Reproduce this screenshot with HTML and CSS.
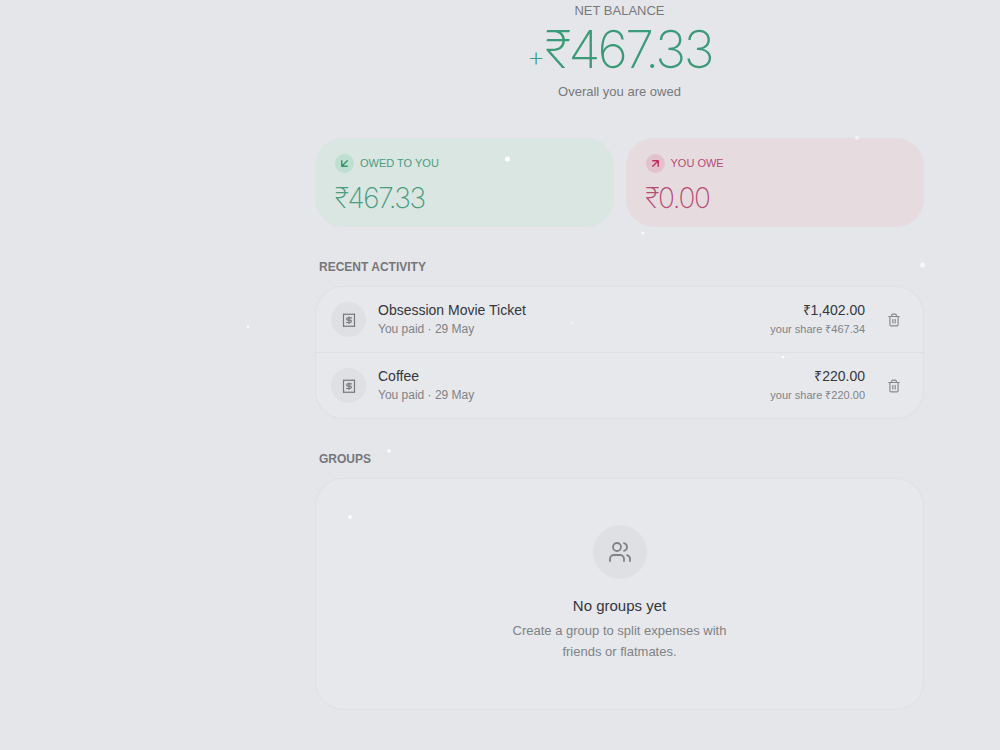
FILE: index.html
```html
<!DOCTYPE html>
<html lang="en">
<head>
<meta charset="utf-8">
<meta name="viewport" content="width=device-width, initial-scale=1">
<title>Net balance</title>
<link rel="stylesheet" href="styles.css">
</head>
<body>
<svg class="sparkles" aria-hidden="true">
  <circle cx="507.500" cy="159" r="2.500"/>
  <circle cx="922.500" cy="265" r="2.500" opacity=".7"/>
  <circle cx="389" cy="451" r="2" opacity=".7"/>
  <circle cx="350" cy="517" r="1.800"/>
  <circle cx="643" cy="233" r="1.500" opacity=".8"/>
  <circle cx="783" cy="357" r="1.300"/>
  <circle cx="248" cy="327" r="1.300" opacity=".8"/>
  <circle cx="857" cy="138" r="2" opacity=".5"/>
  <circle cx="572" cy="323" r="1.500" opacity=".4"/>
</svg>
<main class="page">
  <div class="column">
    <header class="balance">
      <h1 class="balance-label">NET BALANCE</h1>
      <p class="balance-amount"><span class="balance-sign">+</span>₹467.33</p>
      <p class="balance-note">Overall you are owed</p>
    </header>

    <section class="totals">
      <article class="total total-in">
        <h2 class="total-label">
          <span class="total-badge"><svg class="arrow" viewBox="0 0 24 24"><path d="M18 6 6 18M18 18H6V6"/></svg></span>OWED TO YOU
        </h2>
        <p class="total-amount">₹467.33</p>
      </article>
      <article class="total total-out">
        <h2 class="total-label">
          <span class="total-badge"><svg class="arrow" viewBox="0 0 24 24"><path d="M6 6h12v12M6 18 18 6"/></svg></span>YOU OWE
        </h2>
        <p class="total-amount">₹0.00</p>
      </article>
    </section>

    <section class="block">
      <h2 class="block-title">RECENT ACTIVITY</h2>
      <ul class="panel activity">
        <li class="entry">
          <span class="entry-icon"><svg class="receipt" viewBox="0 0 16 16"><path d="M2.500 2l1 .5 1-.5 1.200.5 1.100-.5 1.200.5 1.200-.5 1.100.5 1.200-.5 1 .5 1-.5v12.500l-1-.5-1 .5-1.200-.5-1.100.5-1.200-.5-1.200.5-1.100-.5-1.200.5-1-.5-1 .5zM10.500 5.900H6.800a1.150 1.150 0 0 0 0 2.300h2.400a1.150 1.150 0 0 1 0 2.300H5.500M8 4.800v6.800"/></svg></span>
          <div class="entry-text">
            <p class="entry-name">Obsession Movie Ticket</p>
            <p class="entry-meta">You paid · 29 May</p>
          </div>
          <div class="entry-sum">
            <p class="entry-total">₹1,402.00</p>
            <p class="entry-share">your share ₹467.34</p>
          </div>
          <button class="delete" type="button" aria-label="Delete Obsession Movie Ticket"><svg class="trash" viewBox="0 0 24 24"><path d="M3 6h18M19 6v14a2 2 0 0 1-2 2H7a2 2 0 0 1-2-2V6M8 6V4a2 2 0 0 1 2-2h4a2 2 0 0 1 2 2v2M10 11v6M14 11v6"/></svg></button>
        </li>
        <li class="entry">
          <span class="entry-icon"><svg class="receipt" viewBox="0 0 16 16"><path d="M2.500 2l1 .5 1-.5 1.200.5 1.100-.5 1.200.5 1.200-.5 1.100.5 1.200-.5 1 .5 1-.5v12.500l-1-.5-1 .5-1.200-.5-1.100.5-1.200-.5-1.200.5-1.100-.5-1.200.5-1-.5-1 .5zM10.500 5.900H6.800a1.150 1.150 0 0 0 0 2.300h2.400a1.150 1.150 0 0 1 0 2.300H5.500M8 4.800v6.800"/></svg></span>
          <div class="entry-text">
            <p class="entry-name">Coffee</p>
            <p class="entry-meta">You paid · 29 May</p>
          </div>
          <div class="entry-sum">
            <p class="entry-total">₹220.00</p>
            <p class="entry-share">your share ₹220.00</p>
          </div>
          <button class="delete" type="button" aria-label="Delete Coffee"><svg class="trash" viewBox="0 0 24 24"><path d="M3 6h18M19 6v14a2 2 0 0 1-2 2H7a2 2 0 0 1-2-2V6M8 6V4a2 2 0 0 1 2-2h4a2 2 0 0 1 2 2v2M10 11v6M14 11v6"/></svg></button>
        </li>
      </ul>
    </section>

    <section class="block">
      <h2 class="block-title">GROUPS</h2>
      <div class="panel empty">
        <span class="empty-icon"><svg class="users" viewBox="0 0 24 24"><path d="M16 21v-2a4 4 0 0 0-4-4H6a4 4 0 0 0-4 4v2M22 21v-2a4 4 0 0 0-3-3.870M16 3.130a4 4 0 0 1 0 7.750"/><circle cx="9" cy="7" r="4"/></svg></span>
        <h3 class="empty-title">No groups yet</h3>
        <p class="empty-note">Create a group to split expenses with friends or flatmates.</p>
      </div>
    </section>
  </div>
</main>
</body>
</html>
```
FILE: styles.css
```css
* {
  box-sizing: border-box;
}

body {
  margin: 0;
  min-height: 100vh;
  background: #e5e6ea;
  color: #35363a;
  font-family: "Liberation Sans", Arial, sans-serif;
  font-size: 13px;
}

h1, h2, h3, p, ul {
  margin: 0;
  padding: 0;
  font-weight: 400;
}

svg {
  display: block;
  fill: none;
  stroke: currentColor;
  stroke-width: 2;
  stroke-linecap: round;
  stroke-linejoin: round;
}

.sparkles {
  position: absolute;
  inset: 0;
  width: 100%;
  height: 100%;
  fill: #fff;
  stroke: none;
  pointer-events: none;
}

.page {
  margin-left: 239px;
}

.column {
  max-width: 609px;
  margin: 0 auto;
}

.balance {
  padding-top: 3px;
  text-align: center;
  color: #77797c;
}

.balance-label {
  font-size: 13px;
  line-height: 16px;
}

.balance-amount {
  margin-top: 9px;
  color: #3b9a77;
  font-family: Inter, sans-serif;
  font-size: 52px;
  font-weight: 200;
  line-height: 44px;
  letter-spacing: -0.05em;
}

.balance-sign {
  font-size: 28px;
  letter-spacing: 0;
  vertical-align: 2px;
}

.balance-note {
  margin-top: 4px;
  font-size: 13px;
  line-height: 20px;
}

.totals {
  display: grid;
  grid-template-columns: 1fr 1fr;
  gap: 12px;
  margin-top: 36px;
}

.total {
  padding: 14px 20px 12px;
  border-radius: 28px;
}

.total-in {
  background: #dae6e2;
  color: #4b9b7d;
}

.total-out {
  background: #e6dce0;
  color: #b64b74;
}

.total-label {
  display: flex;
  align-items: center;
  gap: 6px;
  font-size: 11px;
  line-height: 22px;
}

.total-badge {
  display: grid;
  place-items: center;
  width: 19px;
  height: 19px;
  border-radius: 50%;
}

.total-in .total-badge {
  background: #bfdfd2;
  color: #2f946c;
}

.total-out .total-badge {
  background: #e3c2cd;
  color: #c02c5a;
}

.arrow {
  width: 11px;
  height: 11px;
  stroke-width: 3;
}

.total-amount {
  margin-top: 8px;
  font-family: Inter, sans-serif;
  font-size: 28px;
  font-weight: 200;
  line-height: 33px;
  letter-spacing: -0.05em;
}

.block {
  margin-top: 32px;
}

.block-title {
  padding-left: 4px;
  margin-bottom: 10px;
  color: #75767a;
  font-size: 12px;
  font-weight: 700;
  line-height: 17px;
}

.panel {
  border: 1px solid #dfe0e3;
  border-radius: 28px;
  background: #e7e8ec;
}

.activity {
  list-style: none;
}

.entry {
  display: flex;
  align-items: center;
  height: 65px;
  padding: 0 15px;
}

.entry + .entry {
  height: 66px;
  border-top: 1px solid #dfe0e3;
}

.entry-icon {
  display: grid;
  place-items: center;
  width: 35px;
  height: 35px;
  margin-right: 12px;
  border-radius: 50%;
  background: #dfe0e3;
  color: #77797c;
}

.receipt {
  width: 16px;
  height: 16px;
  stroke-width: 1.2;
}

.entry-text {
  flex: 1;
}

.entry-name,
.entry-total {
  font-size: 14px;
  line-height: 19px;
}

.entry-meta,
.entry-share {
  color: #808286;
  font-size: 12px;
  line-height: 18px;
}

.entry-share {
  font-size: 11px;
}

.entry-sum {
  text-align: right;
}

.delete {
  display: grid;
  place-items: center;
  width: 28px;
  height: 28px;
  margin-left: 15px;
  padding: 0;
  border: 0;
  background: none;
  color: #85878b;
}

.trash {
  width: 14px;
  height: 14px;
}

.empty {
  display: flex;
  flex-direction: column;
  align-items: center;
  padding: 46px 24px 47px;
  text-align: center;
}

.empty-icon {
  display: grid;
  place-items: center;
  width: 54px;
  height: 54px;
  border-radius: 50%;
  background: #dfe0e3;
  color: #808286;
}

.users {
  width: 24px;
  height: 24px;
  stroke-width: 1.8;
}

.empty-title {
  margin-top: 16px;
  font-size: 15px;
  line-height: 22px;
}

.empty-note {
  max-width: 250px;
  margin-top: 3px;
  color: #808286;
  font-size: 13px;
  line-height: 21px;
}
```
